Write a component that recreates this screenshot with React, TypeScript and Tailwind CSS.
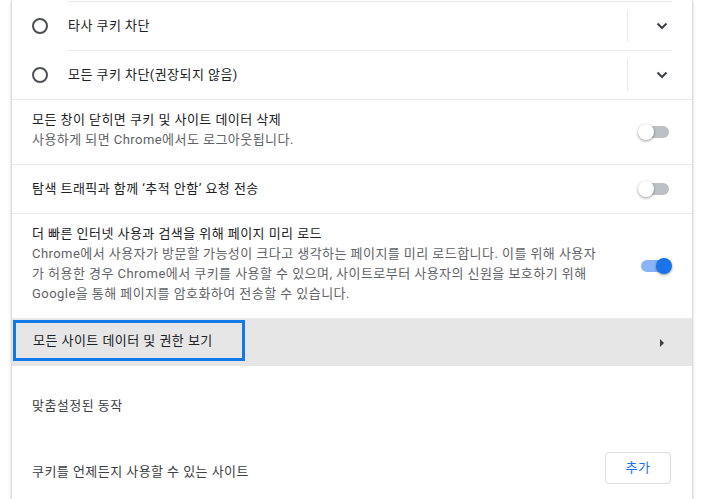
import React from "react";

function Radio() {
  return <span className="block h-4 w-4 shrink-0 rounded-full border-2 border-[#4d5156]" />;
}

function Chevron() {
  return (
    <svg width="12" height="8" viewBox="0 0 12 8" className="text-[#3c4043]">
      <path d="M1.5 1.5l4.5 4.5 4.5-4.5" fill="none" stroke="currentColor" strokeWidth="2" />
    </svg>
  );
}

function Toggle({ on = false }: { on?: boolean }) {
  return (
    <span className="relative block h-4 w-[34px] shrink-0">
      <span
        className={
          on
            ? "absolute left-[3px] top-[2px] h-3 w-[28px] rounded-full bg-[#8ab4f8]"
            : "absolute left-[3px] top-[2px] h-3 w-[28px] rounded-full bg-[#bdc1c6]"
        }
      />
      <span
        className={
          on
            ? "absolute right-0 top-0 h-4 w-4 rounded-full bg-[#1a73e8] shadow-[0_1px_3px_rgba(0,0,0,0.4)]"
            : "absolute left-0 top-0 h-4 w-4 rounded-full bg-white shadow-[0_1px_3px_rgba(0,0,0,0.4)]"
        }
      />
    </span>
  );
}

function RadioRow({ label }: { label: string }) {
  return (
    <div className="flex h-[48px] items-center pl-[20px] pr-[16px]">
      <Radio />
      <span className="ml-[20px] flex-1">{label}</span>
      <span className="h-[32px] w-px bg-[#e8eaed]" />
      <span className="ml-[20px] flex w-[28px] justify-center">
        <Chevron />
      </span>
    </div>
  );
}

const Line = () => <div className="h-px bg-[#e8eaed]" />;

export default function App() {
  return (
    <div className="h-[499px] overflow-hidden bg-white font-['Roboto','Noto_Sans_CJK_KR',sans-serif] text-[13px] leading-[20px] tracking-[0.45px] text-[#202124]">
      <div className="ml-[12px] w-[680px] bg-white pb-[40px] shadow-[0_1px_2px_0_rgba(60,64,67,0.3),0_1px_3px_1px_rgba(60,64,67,0.15)]">
        <div className="h-px" />
        <div className="ml-[56px] mr-[20px] h-px bg-[#e8eaed]" />
        <RadioRow label="타사 쿠키 차단" />
        <div className="ml-[56px] mr-[20px] h-px bg-[#e8eaed]" />
        <RadioRow label="모든 쿠키 차단(권장되지 않음)" />
        <Line />

        <div className="flex h-[64px] items-start px-[20px] pt-[10px]">
          <div className="flex-1">
            <div>모든 창이 닫히면 쿠키 및 사이트 데이터 삭제</div>
            <div className="text-[#5f6368]">사용하게 되면 Chrome에서도 로그아웃됩니다.</div>
          </div>
          <span className="mt-[14px]">
            <Toggle />
          </span>
        </div>
        <Line />

        <div className="flex h-[48px] items-center px-[20px]">
          <span className="flex-1">탐색 트래픽과 함께 ‘추적 안함’ 요청 전송</span>
          <Toggle />
        </div>
        <Line />

        <div className="flex h-[104px] items-start px-[20px] pt-[10px]">
          <div className="flex-1 whitespace-nowrap">
            <div>더 빠른 인터넷 사용과 검색을 위해 페이지 미리 로드</div>
            <div className="text-[#5f6368]">
              <div>Chrome에서 사용자가 방문할 가능성이 크다고 생각하는 페이지를 미리 로드합니다. 이를 위해 사용자</div>
              <div>가 허용한 경우 Chrome에서 쿠키를 사용할 수 있으며, 사이트로부터 사용자의 신원을 보호하기 위해</div>
              <div>Google을 통해 페이지를 암호화하여 전송할 수 있습니다.</div>
            </div>
          </div>
          <span className="mt-[34px]">
            <Toggle on />
          </span>
        </div>
        <Line />

        <div className="flex h-[47px] items-start bg-[#e6e6e6] pl-px pr-[16px] pt-px">
          <div className="flex h-[41px] w-[232px] items-center border-[3px] border-[#1379e6] pl-[17px]">
            모든 사이트 데이터 및 권한 보기
          </div>
          <span className="ml-auto flex h-[46px] w-[28px] items-center justify-center">
            <svg width="8" height="10" viewBox="0 0 8 10" className="text-[#3c4043]">
              <path d="M2 1l4 4-4 4z" fill="currentColor" />
            </svg>
          </span>
        </div>

        <div className="px-[20px] pt-[30px] text-[#3c4043]">맞춤설정된 동작</div>

        <div className="flex items-start pl-[20px] pr-[21px] pt-[36px]">
          <span className="mt-[10px] flex-1 text-[#3c4043]">쿠키를 언제든지 사용할 수 있는 사이트</span>
          <button
            type="button"
            className="h-[32px] w-[66px] rounded-[4px] border border-[#dadce0] bg-white text-[13px] text-[#1a73e8]"
          >
            추가
          </button>
        </div>
      </div>
    </div>
  );
}
